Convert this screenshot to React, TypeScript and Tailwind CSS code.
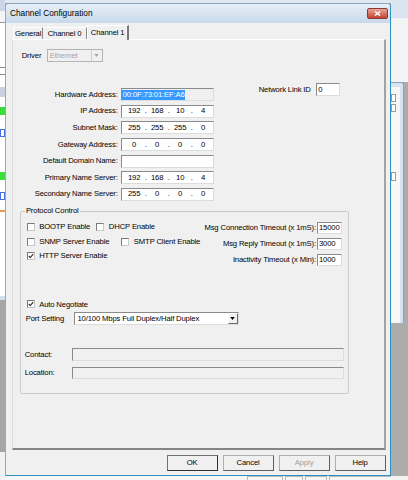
import { Fragment } from 'react';
import type { ReactNode } from 'react';

const FONT = "font-['Liberation_Sans',Arial,sans-serif]";
const SUNKEN = 'border border-t-[#8a8a8a] border-l-[#8a8a8a] border-r-[#dcdcdc] border-b-[#dcdcdc]';

const ipRows: [string, string[]][] = [
  ['IP Address:', ['192', '168', '10', '4']],
  ['Subnet Mask:', ['255', '255', '255', '0']],
  ['Gateway Address:', ['0', '0', '0', '0']],
  ['Default Domain Name:', []],
  ['Primary Name Server:', ['192', '168', '10', '4']],
  ['Secondary Name Server:', ['255', '0', '0', '0']],
];

const timeouts = [
  ['Msg Connection Timeout (x 1mS):', '15000'],
  ['Msg Reply Timeout (x 1mS):', '3000'],
  ['Inactivity Timeout (x Min):', '1000'],
];

function Arrow({ color = '#000' }: { color?: string }) {
  return (
    <svg viewBox="0 0 6 4" className="h-[3px] w-[5px]">
      <path d="M0 0 H6 L3 4 Z" fill={color} />
    </svg>
  );
}

function Check({ checked }: { checked?: boolean }) {
  return (
    <span className="flex h-[8px] w-[8px] shrink-0 items-center justify-center border border-[#7a7a7a] border-r-[#c8c8c8] border-b-[#c8c8c8] bg-white">
      {checked && (
        <svg viewBox="0 0 8 8" className="h-[6px] w-[6px]">
          <path d="M1 3.8 L3 6 L7 1.5" fill="none" stroke="#1a1a1a" strokeWidth="1.4" />
        </svg>
      )}
    </span>
  );
}

function CheckItem({ label, checked, className = '' }: { label: string; checked?: boolean; className?: string }) {
  return (
    <div className={`flex h-[14.5px] items-center gap-[4.5px] ${className}`}>
      <Check checked={checked} />
      <span>{label}</span>
    </div>
  );
}

function Field({ label, children }: { label: string; children: ReactNode }) {
  return (
    <div className="flex h-[16.6px] items-center">
      <span className="w-[108px] pr-[3px] text-right">{label}</span>
      {children}
    </div>
  );
}

function IpBox({ parts }: { parts: string[] }) {
  return (
    <div className={`flex h-[13px] w-[93px] items-center bg-white pl-[3px] ${SUNKEN}`}>
      {parts.map((p, i) => (
        <Fragment key={i}>
          {i > 0 && <span className="w-[4px] text-center">.</span>}
          <span className="w-[19px] text-center">{p}</span>
        </Fragment>
      ))}
    </div>
  );
}

function Button({ label, primary, disabled }: { label: string; primary?: boolean; disabled?: boolean }) {
  const edge = primary
    ? 'border-[#707070] border-r-[#303030] border-b-[#303030]'
    : 'border-[#b0b0b0] border-r-[#5f5f5f] border-b-[#5f5f5f]';
  return (
    <div
      className={`flex h-[16px] w-[51px] items-center justify-center border bg-[#f0f0f0] ${edge} ${
        disabled ? 'text-[#a0a0a0]' : 'text-black'
      }`}
    >
      {label}
    </div>
  );
}

function LeftBackdrop() {
  return (
    <div className="flex w-[5px] shrink-0 flex-col bg-white">
      <div className="h-[11px] bg-[#c9d7e8]" />
      <div className="h-[11px] bg-[#f4f4f4]" />
      <div className="h-[1px] bg-[#9a9a9a]" />
      <div className="h-[44px]" />
      <div className="h-[8px] border-y border-[#8a8a8a]" />
      <div className="h-[12px]" />
      <div className="h-[10px] bg-[#c9d3df]" />
      <div className="h-[10px]" />
      <div className="h-[8px] bg-[#3ddc3d]" />
      <div className="h-[14px]" />
      <div className="h-[8px] border border-[#4b6fe0]" />
      <div className="h-[35px]" />
      <div className="h-[8px] bg-[#3ddc3d]" />
      <div className="h-[12px]" />
      <div className="h-[8px] border border-[#4b6fe0]" />
      <div className="h-[10px]" />
      <div className="h-[2px] bg-[#e39a55]" />
      <div className="h-[84px]" />
      <div className="h-[4px] bg-[#cfe0f1]" />
      <div className="h-[152px] bg-[#a6a6a6]" />
      <div className="flex-1 bg-[#f2f2f2]" />
    </div>
  );
}

function RightBackdrop() {
  return (
    <div className="flex w-[17px] shrink-0 flex-col bg-[#acacac]">
      <div className="h-[18px] bg-[#dae5f1]" />
      <div className="h-[64px] bg-[#f3f4f6]" />
      <div className="flex h-[241px]">
        <div className="flex w-[13px] flex-col rounded-tr-[3px] border-t border-r border-[#8fa3b8] bg-[#d6e3f1] pr-[3px] pt-[4px]">
          <div className="flex-1 bg-[#f7f7f7] pt-[7px]">
            <div className="h-[8px] w-[5px] border border-[#9a9a9a] bg-white" />
            <div className="mt-[2px] h-[8px] w-[5px] border border-[#9a9a9a] bg-white" />
            <div className="mt-[60px] h-[9px] w-[5px] border border-[#9a9a9a] bg-white" />
          </div>
        </div>
        <div className="flex-1" />
      </div>
      <div className="flex-1" />
      <div className="h-[4px] bg-[#f2f2f2]" />
    </div>
  );
}

function Dialog() {
  return (
    <div className="flex h-[473px] flex-col rounded-t-[4px] border border-t-[#8fa5be] border-l-[#9aa7b5] border-r-[#2f8fbd] border-b-[#2f8fbd] bg-[#f0f0f0]">
      {/* title bar */}
      <div className="flex h-[19px] items-center justify-between rounded-t-[3px] bg-linear-to-b from-[#e6eef7] to-[#c9d9eb] pl-[4px] pr-[2px]">
        <span className="text-[8.3px] tracking-normal">Channel Configuration</span>
        <div className="flex h-[11.5px] w-[21px] items-center justify-center rounded-[2px] border border-[#8b3a32] bg-linear-to-b from-[#e7a496] to-[#c0432f]">
          <svg viewBox="0 0 8 6" className="h-[5px] w-[7px]">
            <path d="M1 0.5 L7 5.5 M7 0.5 L1 5.5" stroke="#fff" strokeWidth="1.6" />
          </svg>
        </div>
      </div>

      {/* tabs */}
      <div className="mt-[2px] flex h-[14px] items-end pl-[7.3px]">
        <div className="flex h-[12px] w-[29.7px] items-center justify-center border-t border-l border-r border-t-white border-l-white border-r-[#8a8a8a]">
          General
        </div>
        <div className="flex h-[12px] w-[44px] items-center justify-center border-t border-r border-t-white border-r-[#8a8a8a]">
          Channel 0
        </div>
        <div className="relative z-10 -mb-[1px] flex h-[15px] w-[42.3px] items-center justify-center border-t border-l border-r-2 border-t-white border-l-white border-r-[#7a7a7a] bg-[#f0f0f0] pb-[1px]">
          Channel 1
        </div>
      </div>

      {/* tab panel */}
      <div className="ml-[5.7px] flex h-[411px] w-[374px] flex-col border border-r-2 border-b-2 border-t-white border-l-[#dcdcdc] border-r-[#a3a3a3] border-b-[#858585]">
        <div className="ml-[9px] mt-[9.3px] flex h-[12.7px] items-center">
          <span className="w-[25px]">Driver</span>
          <div className="flex h-full w-[56px] items-center border border-[#b4b4b4] bg-[#f0f0f0]">
            <span className="flex-1 pl-[2px] text-[#a6a6a6]">Ethernet</span>
            <div className="flex h-full w-[11px] items-center justify-center border-l border-[#d0d0d0]">
              <Arrow color="#a6a6a6" />
            </div>
          </div>
        </div>

        <div className="mt-[21px] flex items-start">
          <div className="flex flex-col pt-[3.4px]">
            <Field label="Hardware Address:">
              <div className={`flex h-[13px] w-[93px] items-center bg-[#f0f0f0] pl-[0.5px] ${SUNKEN}`}>
                <span className="bg-[#3399ff] px-[0.5px] py-[1px] text-white">00:0F:73:01:EF:A6</span>
              </div>
            </Field>
            {ipRows.map(([label, parts]) => (
              <Field key={label} label={label}>
                <IpBox parts={parts} />
              </Field>
            ))}
          </div>
          <div className="ml-[45px] flex h-[13px] items-center gap-[5px]">
            <span>Network Link ID</span>
            <div className={`flex h-[13px] w-[24px] items-center bg-white pl-[1.5px] ${SUNKEN}`}>0</div>
          </div>
        </div>

        {/* protocol control */}
        <div className="relative ml-[7.7px] mt-[8.1px] flex h-[183.3px] w-[328.3px] flex-col rounded-[2px] border border-[#cacaca]">
          <span className="absolute -top-[4.5px] left-[3.5px] bg-[#f0f0f0] px-[1px]">Protocol Control</span>

          <div className="mt-[8.3px] flex h-[48px] justify-between pl-[5.3px] pr-[5.3px]">
            <div className="flex flex-col">
              <div className="flex">
                <CheckItem label="BOOTP Enable" className="w-[69.7px]" />
                <CheckItem label="DHCP Enable" />
              </div>
              <div className="flex">
                <CheckItem label="SNMP Server Enable" className="w-[94.7px]" />
                <CheckItem label="SMTP Client Enable" />
              </div>
              <CheckItem label="HTTP Server Enable" checked />
            </div>
            <div className="flex flex-col">
              {timeouts.map(([label, value]) => (
                <div key={label} className="flex h-[16px] items-center justify-end gap-[1px]">
                  <span>{label}</span>
                  <div className={`flex h-[12px] w-[25.4px] items-center bg-white pl-[1px] ${SUNKEN}`}>{value}</div>
                </div>
              ))}
            </div>
          </div>

          <div className="ml-[5.3px] mt-[29.3px]">
            <CheckItem label="Auto Negotiate" checked />
          </div>

          <div className="ml-[4.3px] mt-[0.5px] flex h-[12.4px] items-center">
            <span className="w-[48.3px]">Port Setting</span>
            <div className={`flex h-full w-[165px] items-center bg-white ${SUNKEN}`}>
              <span className="flex-1 pl-[2.5px]">10/100 Mbps Full Duplex/Half Duplex</span>
              <div className="flex h-full w-[10px] items-center justify-center border border-t-white border-l-white border-r-[#6a6a6a] border-b-[#6a6a6a] bg-[#f0f0f0]">
                <Arrow />
              </div>
            </div>
          </div>

          <div className="ml-[3.3px] mt-[23.6px] flex h-[12.7px] items-center">
            <span className="w-[47px]">Contact:</span>
            <div className={`h-full w-[272px] bg-[#f0f0f0] ${SUNKEN}`} />
          </div>
          <div className="ml-[3.3px] mt-[5.7px] flex h-[12.6px] items-center">
            <span className="w-[47px]">Location:</span>
            <div className={`h-full w-[272px] bg-[#f0f0f0] ${SUNKEN}`} />
          </div>
        </div>
      </div>

      {/* buttons */}
      <div className="mt-[5px] flex justify-end gap-[5px] pr-[4.4px]">
        <Button label="OK" primary />
        <Button label="Cancel" />
        <Button label="Apply" disabled />
        <Button label="Help" />
      </div>
    </div>
  );
}

function BottomBackdrop() {
  return (
    <div className="flex h-[4px] bg-[#f6f6f6]">
      <div className="w-[242px]" />
      <div className="w-[36px] border-t border-l border-r border-[#b9b9b9]" />
      <div className="ml-[2px] w-[18px] border-t border-l border-r border-[#b9b9b9]" />
      <div className="ml-[2px] w-[22px] border-t border-l border-r border-[#b9b9b9]" />
      <div className="ml-[2px] flex-1 border-t border-l border-[#b9b9b9]" />
    </div>
  );
}

export default function App() {
  return (
    <div
      className={`${FONT} flex h-[480px] w-[408px] overflow-hidden bg-[#a8a8a8] text-[7.7px] leading-none tracking-[-0.15px] text-black`}
    >
      <LeftBackdrop />
      <div className="flex w-[386px] shrink-0 flex-col">
        <div className="h-[3px] bg-[#dfe7f1]" />
        <Dialog />
        <BottomBackdrop />
      </div>
      <RightBackdrop />
    </div>
  );
}
